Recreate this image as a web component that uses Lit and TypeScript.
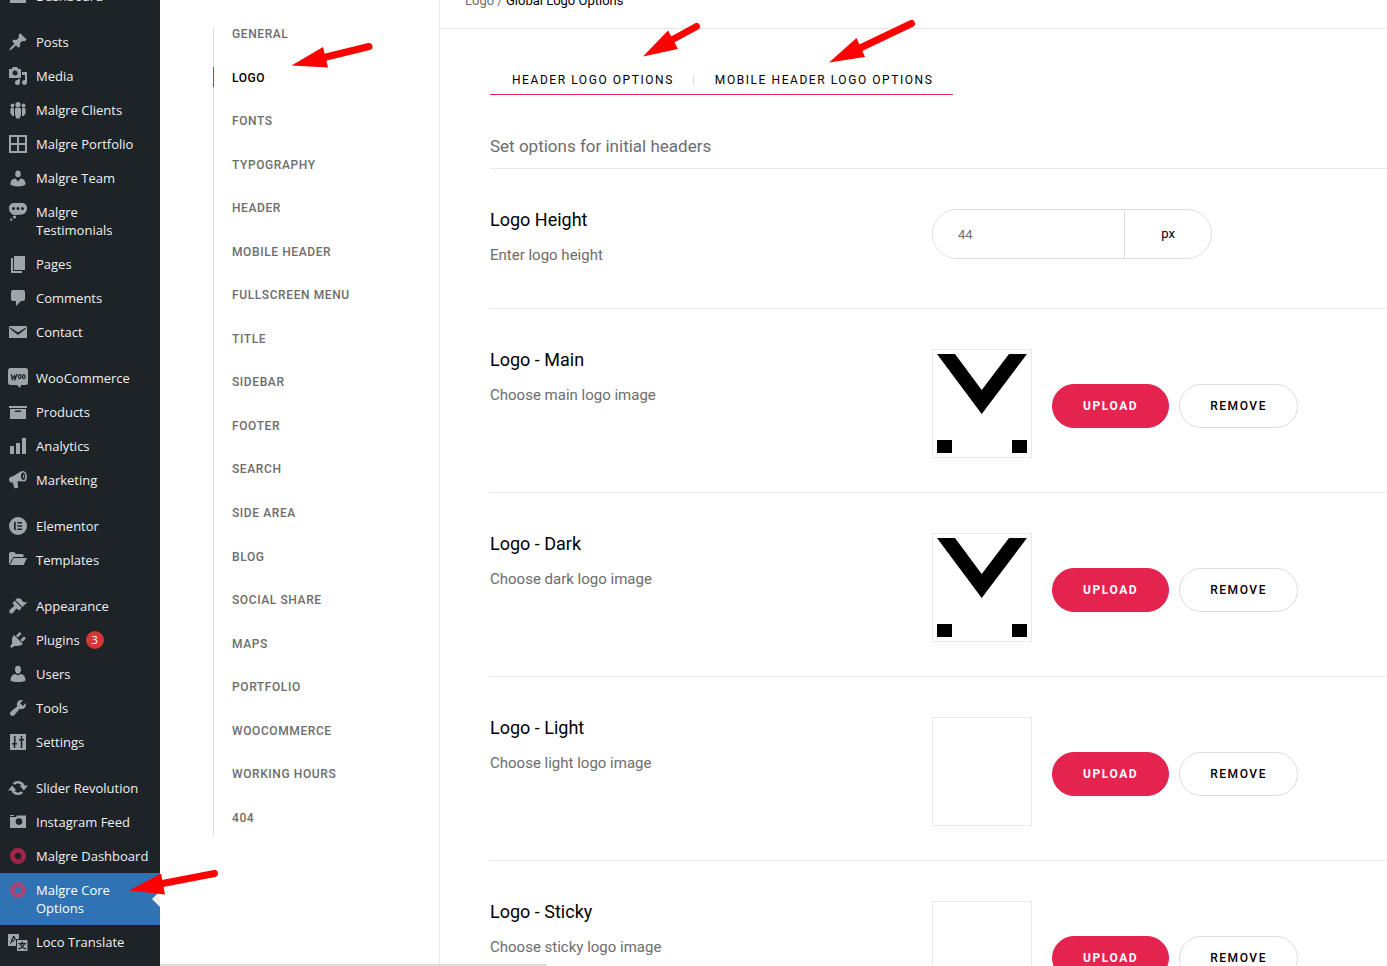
import { LitElement, html, css, svg, nothing } from "lit";
import { customElement } from "lit/decorators.js";

const icons: Record<string, unknown> = {
  dashboard: svg`<path d="M2 17V11a8 8 0 0 1 16 0v6z"/>`,
  posts: svg`<path d="M10.44 3.02l1.82-1.82 6.36 6.35-1.83 1.82c-1.05-.68-2.48-.57-3.41.36l-.75.75c-.92.93-1.04 2.35-.35 3.41l-1.83 1.82-2.41-2.41-2.8 2.79c-.42.42-3.38 2.71-3.8 2.29s1.86-3.39 2.28-3.81l2.79-2.79L4.1 9.36l1.83-1.82c1.05.69 2.48.57 3.4-.36l.75-.75c.93-.92 1.05-2.35.36-3.41z"/>`,
  media: svg`<path fill-rule="evenodd" d="M13 11V4c0-.55-.45-1-1-1h-1.670L9 1H5L3.670 3H2c-.55 0-1 .45-1 1v7c0 .55.45 1 1 1h10c.55 0 1-.45 1-1zM7 4.500a2.500 2.500 0 1 1 0 5 2.500 2.500 0 0 1 0-5zM14 6h5v10.500c0 1.380-1.120 2.500-2.500 2.500S14 17.880 14 16.500s1.120-2.500 2.500-2.500c.17 0 .34.020.5.050V9h-3V6zm-4 8.050V13h2v3.500a2.500 2.500 0 1 1-2-2.450z"/>`,
  clients: svg`<circle cx="10" cy="4.500" r="2.600"/><circle cx="4.500" cy="5.500" r="1.900"/><circle cx="15.500" cy="5.500" r="1.900"/><path d="M7 8.500Q10 6.500 13 8.500V15l-1.300 3.500H8.300L7 15zM2.500 8.500Q4.500 7 6 8.500V16H4.300L2.300 13zM17.500 8.500Q15.500 7 14 8.500V16h1.700l2-3z"/>`,
  portfolio: svg`<path fill-rule="evenodd" d="M1 1h18v18H1zM3 3v6h6V3zm8 0v6h6V3zM3 11v6h6v-6zm8 0v6h6v-6z"/>`,
  team: svg`<path d="M7.250 6A2.750 3.200 0 1 0 12.750 6a2.750 3.500 0 1 0-5.500 0zM2.500 16.500c0-4 1.500-5.700 5-6L10 13.500l2.500-3c3.500.3 5 2 5 6-2 2.500-13 2.500-15 0z"/>`,
  testimonials: svg`<path fill-rule="evenodd" d="M6 1h8c3 0 5 2.200 5 5.200S17 12 14 12.500L8 13c-4 .5-7-3-7-6.800C1 3.200 3 1 6 1zm-.5 4a1.500 1.500 0 1 0 0 3 1.500 1.500 0 0 0 0-3zM10 5a1.500 1.500 0 1 0 0 3 1.500 1.500 0 0 0 0-3zm4.500 0a1.500 1.500 0 1 0 0 3 1.500 1.500 0 0 0 0-3z"/><circle cx="6.500" cy="15" r="1.600"/><circle cx="3.200" cy="17.600" r="1.200"/>`,
  pages: svg`<path d="M6 2h11v14H6zM3 4h2v13h9v2H3z"/>`,
  comments: svg`<path d="M5 2h10c1.100 0 2 .9 2 2v7c0 1.100-.9 2-2 2h-2l-5 5v-5H5c-1.100 0-2-.9-2-2V4c0-1.100.9-2 2-2z"/>`,
  contact: svg`<path fill-rule="evenodd" d="M2 4h16a1 1 0 0 1 1 1v11H1V5a1 1 0 0 1 1-1zm.3 1.500V7L10 13l7.700-6V5.500L10 10.500z"/>`,
  woo: svg`<path d="M2.500 0h15A2.500 2.500 0 0 1 20 2.500v12a2.500 2.500 0 0 1-2.500 2.500H13l-1 3-3-3H2.500A2.500 2.500 0 0 1 0 14.500v-12A2.500 2.500 0 0 1 2.500 0z"/><path d="M3.300 6.200l1 5 2.200-3.400.6 3.400L9 6" fill="none" stroke="#1d2327" stroke-width="1.300"/><ellipse cx="11.800" cy="8.600" rx="1.300" ry="2" fill="none" stroke="#1d2327" stroke-width="1.200"/><ellipse cx="15.800" cy="8.600" rx="1.300" ry="2" fill="none" stroke="#1d2327" stroke-width="1.200"/>`,
  products: svg`<path fill-rule="evenodd" d="M1 4h18v2H1zM2 7h16v10H2zM7 8.500V10h6V8.500z"/>`,
  analytics: svg`<path d="M2 10h4v8H2zM8 7h4v11H8zM14 2h4v16h-4z"/>`,
  marketing: svg`<path fill-rule="evenodd" d="M14.500 1c2.400-.6 4.200 2 4.400 5.200.2 3-1.200 5.600-3.400 5.300-2-.3-3.500-.6-6-.1l.7 6.200c0 .6-3.500 1-3.800.3L4.800 12.500C2.500 13 1 11.500 1 9.700 1 7.800 2 7 4 6.500 8 5.500 10 2 14.500 1zm.5 1.500c-1.500.3-2.200 2-2 4.200.2 2 1.200 3.500 2.500 3.300s2-1.800 1.800-4-1.200-3.700-2.300-3.500zm.1 2.300c.7 0 1.200.7 1.200 1.600 0 1-.5 1.600-1.100 1.600z"/>`,
  elementor: svg`<path fill-rule="evenodd" d="M10 1a9 9 0 1 1 0 18 9 9 0 0 1 0-18zM6 6v8h1.700V6zm3.300 0v1.600H14V6zm0 3.200v1.600H14V9.200zm0 3.200V14H14v-1.600z"/>`,
  templates: svg`<path d="M1 15V4c0-1 .5-2 2-2h3l2 2h6c1 0 1.500.5 1.500 1.500V7H6.500c-1 0-1.500.3-2 1.200zM6.500 8H19l-3.500 7H2l3-6c.3-.7.7-1 1.500-1z"/>`,
  appearance: svg`<path d="M14.480 11.060L7.410 3.990l1.500-1.500c.5-.56 2.300-.47 3.510.32 1.210.8 1.430 1.280 2 2.100 1.180 1.700 2.980 1.500 5.180 1.100zm-.71.71L6.700 4.700 4.930 6.470c-.39.39-.39 1.020 0 1.410l1.060 1.060c.39.39.39 1.030 0 1.420-.6.6-1.430 1.110-2.210 1.690-.35.26-.7.53-1.010.84-1.430 1.430-1.720 2.830-1.170 3.800.9 1.200 2.600.8 3.900-.5.310-.31.580-.66.850-1.020.570-.78 1.080-1.610 1.690-2.210.39-.39 1.020-.39 1.410 0l1.060 1.060c.39.39 1.020.39 1.410 0z"/>`,
  plugins: svg`<path d="M13.110 4.360L9.870 7.600 8 5.730l3.240-3.240c.35-.34 1.050-.2 1.560.32.520.51.660 1.210.31 1.550zm-8 1.770l.91-1.120 9.010 9.010-1.190.84c-.71.710-2.630 1.160-3.820 1.160H6.140L4.900 17.260c-.59.590-1.540.590-2.120 0-.59-.58-.59-1.530 0-2.120l1.240-1.240v-3.880c0-1.130.4-3.190 1.090-3.890zm7.260 3.970l3.240-3.240c.340-.350 1.040-.210 1.550.310.520.510.660 1.210.310 1.550l-3.240 3.250z"/>`,
  users: svg`<path d="M7 5.500a3 3.700 0 1 1 6 0C13 8 11.700 9.800 10 9.800S7 8 7 5.500zM2.500 16.500c0-3.500 1.500-6 4.500-6.500 1.800 1.500 4.200 1.500 6 0 3 .5 4.500 3 4.500 6.500-3 2-12 2-15 0z"/>`,
  tools: svg`<path d="M16.680 9.770c-1.340 1.340-3.300 1.670-4.950.990l-5.410 6.520c-.99.990-2.590.990-3.580 0s-.99-2.590 0-3.570l6.520-5.420c-.68-1.650-.35-3.610.990-4.950 1.280-1.280 3.120-1.620 4.720-1.060l-2.890 2.890 2.820 2.820 2.860-2.870c.53 1.580.180 3.390-1.080 4.650z"/>`,
  settings: svg`<path fill-rule="evenodd" d="M2 2h16v16H2zM6 4v7H4v1.500h1.700V16h1.600v-3.500H9V11H7.500V4zm6.700 0v3H11v1.500h1.700V16h1.600V8.500H16V7h-1.700V4z"/>`,
  slider: svg`<path d="M10 3a7 7 0 0 1 6.600 4.600H20l-4.200 5-4.200-5h2.200A4.500 4.500 0 0 0 6.800 6.800L4.700 5.200A7 7 0 0 1 10 3zM10 17a7 7 0 0 1-6.600-4.600H0l4.200-5 4.200 5H6.200a4.500 4.500 0 0 0 7 .8l2.100 1.600A7 7 0 0 1 10 17z"/>`,
  instagram: svg`<path fill-rule="evenodd" d="M2 3h4v1H2zM2 5h6l1-1.500h9V16H2zM11 6.300a3.300 3.300 0 1 0 0 6.600 3.300 3.300 0 0 0 0-6.600z"/><path d="M11 8a1.600 1.600 0 1 1 0 3.200A1.600 1.600 0 0 1 11 8z" fill="#1d2327"/>`,
  ring: svg`<path fill-rule="evenodd" fill="#a32449" d="M10 2a8 8 0 1 1 0 16 8 8 0 0 1 0-16zm0 4.800a3.200 3.200 0 1 0 0 6.400 3.200 3.200 0 0 0 0-6.400z"/><path d="M12 13l2 2.600" stroke="#6b1c35"/>`,
  ringActive: svg`<path fill-rule="evenodd" fill="#a64877" d="M10 2a8 8 0 1 1 0 16 8 8 0 0 1 0-16zm0 4.800a3.200 3.200 0 1 0 0 6.400 3.200 3.200 0 0 0 0-6.400z"/><path d="M12 13l2 2.600" stroke="#7a5590"/>`,
  loco: svg`<path fill-rule="evenodd" d="M0 2h11v5H8v7H0zM2 11.500h1.300l.8-2h2.300V8H4.700l1-2.500.7 2.200H8L6.500 4H5z"/><path fill-rule="evenodd" d="M9 8h10.500v11H9zm4.600 1.500V11h-3.200v1.200h1.400c.3 1.200.9 2 1.600 2.700-.8.700-1.800 1.100-3 1.400v1.300c1.500-.3 2.800-.9 3.900-1.800 1.100.9 2.300 1.500 3.800 1.800v-1.300c-1.200-.3-2.200-.7-3-1.400.8-.7 1.300-1.500 1.600-2.700h1.400V11h-3.200V9.500zm-.4 2.700h2.300c-.2.700-.6 1.300-1.100 1.800-.6-.5-1-1.100-1.200-1.800z"/>`,
};

type MenuItem = { icon: string; label: string; badge?: number; active?: boolean };

const menu: MenuItem[][] = [
  [{ icon: "dashboard", label: "Dashboard" }],
  [
    { icon: "posts", label: "Posts" },
    { icon: "media", label: "Media" },
    { icon: "clients", label: "Malgre Clients" },
    { icon: "portfolio", label: "Malgre Portfolio" },
    { icon: "team", label: "Malgre Team" },
    { icon: "testimonials", label: "Malgre Testimonials" },
    { icon: "pages", label: "Pages" },
    { icon: "comments", label: "Comments" },
    { icon: "contact", label: "Contact" },
  ],
  [
    { icon: "woo", label: "WooCommerce" },
    { icon: "products", label: "Products" },
    { icon: "analytics", label: "Analytics" },
    { icon: "marketing", label: "Marketing" },
  ],
  [
    { icon: "elementor", label: "Elementor" },
    { icon: "templates", label: "Templates" },
  ],
  [
    { icon: "appearance", label: "Appearance" },
    { icon: "plugins", label: "Plugins", badge: 3 },
    { icon: "users", label: "Users" },
    { icon: "tools", label: "Tools" },
    { icon: "settings", label: "Settings" },
  ],
  [
    { icon: "slider", label: "Slider Revolution" },
    { icon: "instagram", label: "Instagram Feed" },
    { icon: "ring", label: "Malgre Dashboard" },
    { icon: "ringActive", label: "Malgre Core Options", active: true },
    { icon: "loco", label: "Loco Translate" },
  ],
];

@customElement("admin-menu")
class AdminMenu extends LitElement {
  static styles = css`
    :host { display: block; width: 160px; flex: none; background: #1d2327; overflow: hidden; }
    .menu { margin-top: -21px; display: flex; flex-direction: column; gap: 12px; }
    .group { list-style: none; margin: 0; padding: 0; }
    .link {
      position: relative; display: flex; align-items: flex-start; gap: 8px;
      padding: 8px 6px 8px 8px; color: #f0f0f1; text-decoration: none;
      font: 13px/18px "Open Sans", "Noto Sans", sans-serif;
    }
    .icon { width: 20px; height: 20px; flex: none; fill: #a0a5aa; margin: -1px 0; }
    .active { background: #2f73b5; color: #fff; }
    .active::after {
      content: ""; position: absolute; right: 0; top: 18px;
      border: 8px solid transparent; border-left: 0; border-right-color: #f0f0f1;
    }
    .label { white-space: nowrap; }
    .wrap { white-space: normal; max-width: 90px; }
    .badge {
      margin: 0 0 0 -2px; width: 18px; height: 18px; border-radius: 9px;
      background: #d63638; color: #fff; font-size: 11px; text-align: center;
    }
  `;
  render() {
    return html`<nav class="menu" aria-label="Admin menu">
      ${menu.map((group) => html`<ul class="group">
        ${group.map((m) => html`<li><a href="#" class="link ${m.active ? "active" : ""}">
          <svg class="icon" viewBox="0 0 20 20" aria-hidden="true">${icons[m.icon]}</svg>
          <span class="label ${/Testimonials|Options/.test(m.label) ? "wrap" : ""}">${m.label}</span>
          ${m.badge ? html`<span class="badge">${m.badge}</span>` : nothing}
        </a></li>`)}
      </ul>`)}
    </nav>`;
  }
}

const sections = [
  "General", "Logo", "Fonts", "Typography", "Header", "Mobile Header", "Fullscreen Menu",
  "Title", "Sidebar", "Footer", "Search", "Side Area", "Blog", "Social Share", "Maps",
  "Portfolio", "WooCommerce", "Working Hours", "404",
];

@customElement("section-nav")
class SectionNav extends LitElement {
  static styles = css`
    :host {
      display: flex; width: 280px; flex: none; box-sizing: border-box;
      padding: 27px 0 130px 53px; border-right: 1px solid #e8e8e8;
    }
    .list {
      list-style: none; margin: 0; padding: 0 0 11px; border-left: 1px solid #e1e1e1;
      display: flex; flex-direction: column; justify-content: space-between;
    }
    .item {
      display: block; padding-left: 18px; color: #6d6d6d; text-decoration: none;
      font: 500 12px/14px Roboto, sans-serif; letter-spacing: 0.05em; text-transform: uppercase;
    }
    .current { color: #000; position: relative; }
    .current::before {
      content: ""; position: absolute; left: -1px; top: -4px; width: 1px; height: 20px; background: #e4234f;
    }
  `;
  render() {
    return html`<ul class="list">
      ${sections.map((s) => html`<li><a href="#" class="item ${s === "Logo" ? "current" : ""}">${s}</a></li>`)}
    </ul>`;
  }
}

@customElement("logo-field")
class LogoField extends LitElement {
  static properties = { name: {}, filled: { type: Boolean } };
  declare name: string;
  declare filled: boolean;
  static styles = css`
    :host { display: flex; align-items: flex-end; }
    .thumb {
      width: 100px; height: 109px; box-sizing: border-box; padding: 4px;
      border: 1px solid #e8e8e8; margin-right: 20px;
    }
    .mark { display: block; width: 90px; height: 99px; }
    .btn {
      height: 44px; margin: 0 10px 30px 0; box-sizing: border-box; padding: 0 30px;
      border: 1px solid #dcdcdc; border-radius: 22px; background: #fff; color: #000;
      font: 500 12px/42px Roboto, sans-serif; letter-spacing: 0.13em; text-transform: uppercase;
    }
    .primary { background: #e4234f; border-color: #e4234f; color: #fff; font-weight: 700; }
  `;
  render() {
    return html`
      <div class="thumb">
        ${this.filled ? html`<svg class="mark" viewBox="0 0 90 99" role="img" aria-label="${this.name} logo">
          <path d="M0 0h18l26.700 36L72 0h18L44.700 60zM0 86h15v13H0zM75 86h15v13H75z"/>
        </svg>` : nothing}
      </div>
      <button class="btn primary" type="button">Upload</button>
      <button class="btn" type="button">Remove</button>`;
  }
}

const logos = [
  { name: "Main", filled: true },
  { name: "Dark", filled: true },
  { name: "Light", filled: false },
  { name: "Sticky", filled: false },
];

@customElement("options-panel")
class OptionsPanel extends LitElement {
  static styles = css`
    :host { display: block; flex: 1; min-width: 0; color: #000; font-family: Roboto, sans-serif; }
    .crumbs {
      height: 36px; margin-top: -8px; padding-left: 25px; border-bottom: 1px solid #e8e8e8;
      font-size: 13px; line-height: 18px; color: #6d6d6d;
    }
    .here { color: #000; }
    .body { padding-left: 50px; }
    .tabs {
      display: inline-flex; align-items: flex-start; margin-top: 43px; padding: 0 20px 0 22px;
      height: 22px; border-bottom: 1px solid #e4234f;
    }
    .tab {
      color: #000; text-decoration: none; text-transform: uppercase;
      font-size: 12px; line-height: 16px; letter-spacing: 0.13em;
    }
    .tab + .tab { margin-left: 19px; padding-left: 22px; background: linear-gradient(#dcdcdc, #dcdcdc) 0 3px / 1px 10px no-repeat; }
    .lead { margin: 0; padding: 37px 0 8px; font-size: 17px; line-height: 28px; font-weight: 400; color: #6d6d6d; }
    .row {
      display: grid; grid-template-columns: 442px 1fr; align-items: start;
      border-top: 1px solid #e8e8e8; padding: 40px 0 34px;
    }
    .size { padding-bottom: 43px; }
    .title { margin: 0; font-size: 18px; line-height: 22px; font-weight: 400; display: block; }
    .hint { margin: 0; padding-top: 14px; font-size: 15px; line-height: 20px; color: #6d6d6d; }
    .unit-box {
      display: flex; width: 280px; height: 50px; box-sizing: border-box;
      border: 1px solid #dcdcdc; border-radius: 25px; overflow: hidden;
    }
    .value {
      flex: 1; min-width: 0; border: 0; outline: 0; padding: 0 25px; background: #fff;
      font: 13px Roboto, sans-serif; color: #6d6d6d;
    }
    .unit { width: 86px; border-left: 1px solid #dcdcdc; text-align: center; font-size: 13px; line-height: 48px; }
  `;
  render() {
    return html`
      <div class="crumbs">Logo / <span class="here">Global Logo Options</span></div>
      <div class="body">
        <nav class="tabs">
          <a class="tab" href="#">Header Logo Options</a>
          <a class="tab" href="#">Mobile Header Logo Options</a>
        </nav>
        <h2 class="lead">Set options for initial headers</h2>
        <section class="row size">
          <div>
            <label class="title" for="height">Logo Height</label>
            <p class="hint">Enter logo height</p>
          </div>
          <div class="unit-box">
            <input class="value" id="height" type="text" value="44" />
            <span class="unit">px</span>
          </div>
        </section>
        ${logos.map((l) => html`<section class="row">
          <div>
            <h3 class="title">Logo - ${l.name}</h3>
            <p class="hint">Choose ${l.name.toLowerCase()} logo image</p>
          </div>
          <logo-field .name=${l.name} .filled=${l.filled}></logo-field>
        </section>`)}
      </div>`;
  }
}

@customElement("app-root")
class AppRoot extends LitElement {
  static styles = css`
    :host { display: flex; position: relative; height: 100vh; overflow: hidden; background: #fff; }
    .arrows { position: absolute; left: 0; top: 0; pointer-events: none; fill: #f00; stroke: #f00; }
    .scroll {
      position: absolute; left: 160px; bottom: 0; width: 387px; height: 2px;
      background: #dcdcde; border-radius: 0 2px 0 0;
    }
  `;
  render() {
    return html`
      <admin-menu></admin-menu>
      <section-nav></section-nav>
      <options-panel></options-panel>
      <div class="scroll"></div>
      <svg class="arrows" width="960" height="966" stroke-width="7" stroke-linecap="round" aria-hidden="true">
        <path d="M369 46.500L322 58"/><path stroke="none" d="M291.500 65.500L323 47l5 20.500z"/>
        <path d="M696.500 26.500L668 42"/><path stroke="none" d="M643 56.500L668 30.500l10 18.500z"/>
        <path d="M911.500 23.500L856 50"/><path stroke="none" d="M829 62.500L856.500 38l8.500 19z"/>
        <path d="M214.500 873.500L160 884"/><path stroke="none" d="M129 890.500L161 873.500l4 21z"/>
      </svg>`;
  }
}
